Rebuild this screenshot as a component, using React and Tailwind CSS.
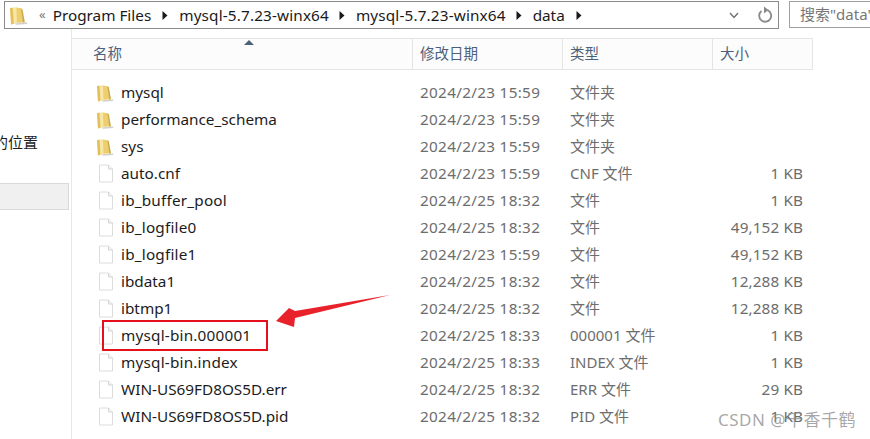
const rows = [
  { name: 'mysql', date: '2024/2/23 15:59', type: '文件夹', size: '', folder: true },
  { name: 'performance_schema', date: '2024/2/23 15:59', type: '文件夹', size: '', folder: true },
  { name: 'sys', date: '2024/2/23 15:59', type: '文件夹', size: '', folder: true },
  { name: 'auto.cnf', date: '2024/2/23 15:59', type: 'CNF 文件', size: '1 KB' },
  { name: 'ib_buffer_pool', date: '2024/2/25 18:32', type: '文件', size: '1 KB', wide: true },
  { name: 'ib_logfile0', date: '2024/2/25 18:32', type: '文件', size: '49,152 KB', wide: true },
  { name: 'ib_logfile1', date: '2024/2/23 15:59', type: '文件', size: '49,152 KB', wide: true },
  { name: 'ibdata1', date: '2024/2/25 18:32', type: '文件', size: '12,288 KB' },
  { name: 'ibtmp1', date: '2024/2/25 18:32', type: '文件', size: '12,288 KB' },
  { name: 'mysql-bin.000001', date: '2024/2/25 18:33', type: '000001 文件', size: '1 KB', wide: true },
  { name: 'mysql-bin.index', date: '2024/2/25 18:33', type: 'INDEX 文件', size: '1 KB', wide: true },
  { name: 'WIN-US69FD8OS5D.err', date: '2024/2/25 18:32', type: 'ERR 文件', size: '29 KB' },
  { name: 'WIN-US69FD8OS5D.pid', date: '2024/2/25 18:32', type: 'PID 文件', size: '1 KB' },
];

const FolderIcon = ({ size = 18 }) => (
  <svg width={size} height={size} viewBox="0 0 18 18" className="shrink-0">
    <path d="M5 16.5 L17.5 15.5 L17 17 L7 17.8 Z" fill="#cfcfcc" />
    <path d="M1 2 L8.5 1 L9.5 15.5 L2 17.5 Z" fill="#f7e6a6" />
    <path d="M1 2 L3.5 1.7 L4.5 16.8 L2 17.5 Z" fill="#e3c05a" />
    <path d="M7 2 L12 2 L13.5 15.6 L7.5 15.8 Z" fill="#edcf70" />
    <path d="M11.5 3 L12.8 3 L15 15.4 L13.2 15.6 Z" fill="#c9a94a" />
  </svg>
);

const FileIcon = () => (
  <svg width="16" height="19" viewBox="0 0 16 19" className="shrink-0">
    <path d="M1.5 1 L10.5 1 L14.5 5 L14.5 18 L1.5 18 Z" fill="#ffffff" stroke="#dcdcdc" />
    <path d="M10.5 1 L10.5 5 L14.5 5" fill="#f4f4f4" stroke="#d4d4d4" />
  </svg>
);

const Chevron = () => (
  <svg width="6" height="9" viewBox="0 0 6 9" className="shrink-0">
    <path d="M0.5 0 L5.5 4.5 L0.5 9 Z" fill="#1a1a1a" />
  </svg>
);

const Row = ({ row }) => (
  <div className="flex h-[27px] items-center text-[15.3px]">
    <div className="flex w-[341px] items-center">
      <div className="flex w-[49px] justify-end pr-[7px]">
        {row.folder ? <FolderIcon /> : <FileIcon />}
      </div>
      <span className={row.wide ? 'tracking-[0.2px] text-[#1c1c1c]' : 'text-[#1c1c1c]'}>{row.name}</span>
    </div>
    <div className="w-[150px] pl-[7px] tracking-[0.3px] text-[#6d6d6d]">{row.date}</div>
    <div className="w-[150px] pl-[7px] text-[15px] text-[#6d6d6d]">{row.type}</div>
    <div className="w-[90px] text-right tracking-[0.1px] text-[#6d6d6d]">{row.size}</div>
  </div>
);

export default function App() {
  return (
    <div
      className="relative h-[439px] w-[870px] overflow-hidden bg-white"
      style={{ fontFamily: '"Noto Sans", "Noto Sans CJK SC", sans-serif' }}
    >
      {/* address bar + search */}
      <div className="flex h-[29px] items-start pt-px">
        <div className="ml-[4px] flex h-[28px] w-[775px] items-center border border-[#8a8a8a] pl-[4px] text-[15.3px] text-[#1a1a1a]">
          <FolderIcon size={19} />
          <span className="ml-[11px] text-[13px] text-[#777]">«</span>
          <span className="ml-[7px]">Program Files</span>
          <span className="mx-[11px]"><Chevron /></span>
          <span className="tracking-[0.15px]">mysql-5.7.23-winx64</span>
          <span className="mx-[10.5px]"><Chevron /></span>
          <span className="tracking-[0.15px]">mysql-5.7.23-winx64</span>
          <span className="mx-[10.5px]"><Chevron /></span>
          <span>data</span>
          <span className="ml-[11px]"><Chevron /></span>
          <svg width="10" height="7" viewBox="0 0 10 7" className="ml-auto mr-[18px]">
            <path d="M1 1 L5 5.5 L9 1" fill="none" stroke="#707070" strokeWidth="1.4" />
          </svg>
          <svg width="16" height="18" viewBox="0 0 16 18" className="mr-[5px]">
            <path d="M10.5 4.2 A6 6 0 1 1 4.5 5" fill="none" stroke="#8a8a8a" strokeWidth="1.8" />
            <path d="M7 0.5 L11.5 4 L7 7.5 Z" fill="#8a8a8a" />
          </svg>
        </div>
        <div className="ml-[10px] flex h-[27px] flex-1 items-center overflow-hidden whitespace-nowrap border border-r-0 border-[#a0a0a0] pl-[10px] text-[15px] text-[#777]">
          搜索"data"
        </div>
      </div>

      <div className="flex h-[410px]">
        {/* navigation pane, only its edge is visible */}
        <div className="relative w-[72px] overflow-hidden border-r border-[#e8e8e8]">
          <div className="mt-[102px] ml-[-7px] whitespace-nowrap text-[15px] text-[#1c1c1c]">的位置</div>
          <div className="mt-[29px] h-[27px] w-[69px] border border-l-0 border-[#d9d9d9] bg-[#f0f0f0]" />
        </div>

        {/* file list */}
        <div className="pt-[9px]">
          <div className="relative flex h-[32px] w-[741px] items-center border-y border-r border-[#e5e5e5] bg-[#fcfcfc] text-[14.5px] text-[#4c607a]">
            <div className="flex h-full w-[341px] items-center border-r border-[#e5e5e5] pl-[21px]">名称</div>
            <div className="flex h-full w-[150px] items-center border-r border-[#e5e5e5] pl-[7px]">修改日期</div>
            <div className="flex h-full w-[150px] items-center border-r border-[#e5e5e5] pl-[7px]">类型</div>
            <div className="flex h-full items-center pl-[7px]">大小</div>
            <svg width="10" height="5" viewBox="0 0 10 5" className="absolute left-[172px] top-[1px]">
              <path d="M0 5 L5 0 L10 5 Z" fill="#4c607a" />
            </svg>
          </div>
          <div className="pt-[9px]">
            {rows.map((row) => (
              <Row key={row.name} row={row} />
            ))}
          </div>
        </div>
      </div>

      {/* red annotations drawn over the screenshot */}
      <div className="absolute left-[102px] top-[320px] h-[31px] w-[166px] border-2 border-[#e60f1c]" />
      <svg width="120" height="34" viewBox="0 0 120 34" className="absolute left-[274px] top-[294px]">
        <path d="M116 1 L21 17 L15 14 L2 27 L20 33 L21 24 Z" fill="#e8212b" />
      </svg>

      {/* watermark */}
      <div className="absolute left-[718px] top-[407px] whitespace-nowrap text-[17px] tracking-[0.5px] text-[#8a8a8a]/75">
        CSDN @千香千鹤
      </div>
    </div>
  );
}
